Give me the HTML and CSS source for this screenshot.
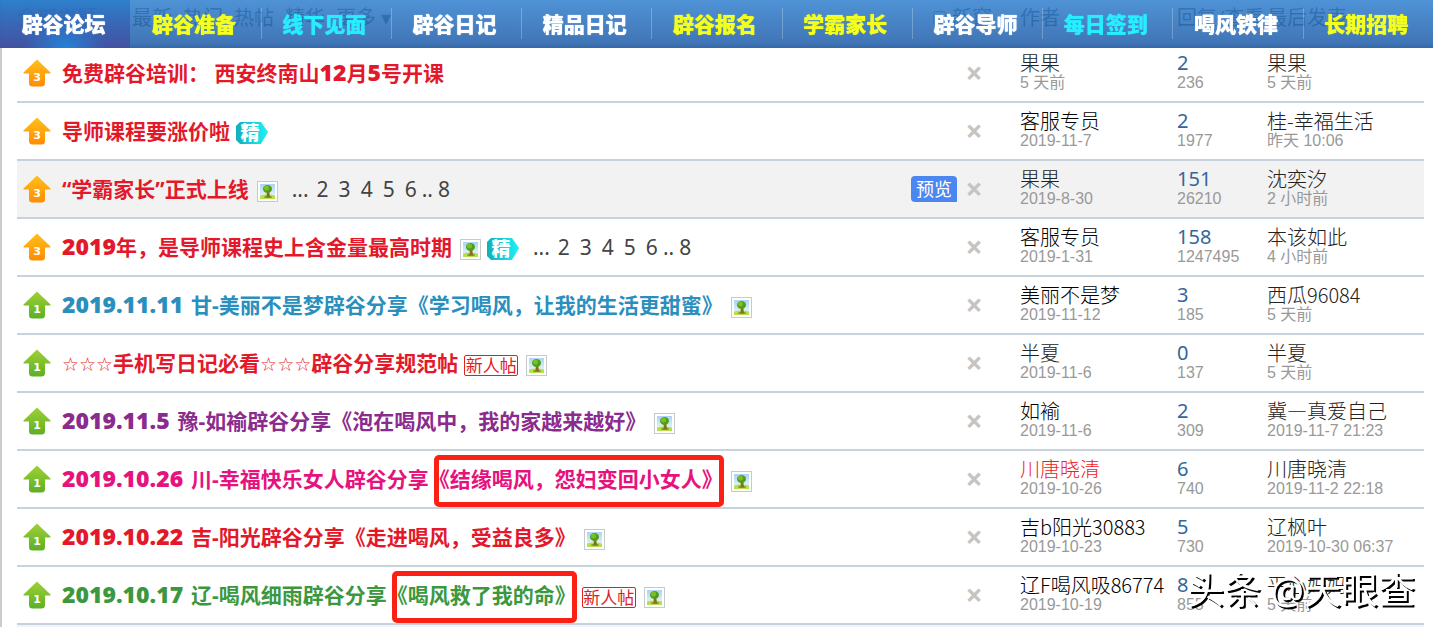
FILE: index.html
```html
<!DOCTYPE html>
<html lang="zh-CN">
  <head>
    <meta charset="utf-8">
    <title>辟谷论坛</title>
    <link rel="stylesheet" href="styles.css">
  </head>
  <body>
    <svg width="0" height="0" class="defs" aria-hidden="true">
      <defs>
        <linearGradient id="orange" x1="0" y1="0" x2="0" y2="1">
          <stop offset="0" stop-color="#ffc01c"/>
          <stop offset="1" stop-color="#ff8c00"/>
        </linearGradient>
        <linearGradient id="green" x1="0" y1="0" x2="0" y2="1">
          <stop offset="0" stop-color="#a0d035"/>
          <stop offset="1" stop-color="#5cb024"/>
        </linearGradient>
        <linearGradient id="cyan" x1="0" y1="0" x2="1" y2="0">
          <stop offset="0" stop-color="#12aebb"/>
          <stop offset="1" stop-color="#1ff0f5"/>
        </linearGradient>
        <linearGradient id="sky" x1="0" y1="0" x2="0" y2="1">
          <stop offset="0" stop-color="#a9d3f7"/>
          <stop offset="1" stop-color="#f4fbf4"/>
        </linearGradient>
      </defs>
      <symbol id="arrow" viewBox="0 0 28 28">
        <path d="M14 0.5L27.5 13.5Q28 14.5 27 14.5H22V24Q22 27.500 18.500 27.500H9.500Q6 27.500 6 24V14.500H1Q0 14.500 0.500 13.500Z"/>
      </symbol>
      <symbol id="pic" viewBox="0 0 21 21">
        <rect x="0.500" y="0.500" width="20" height="20" fill="#fff" stroke="#c5cbc8"/>
        <rect x="3" y="3" width="15" height="15" fill="url(#sky)"/>
        <path d="M3 14.500Q10 12.500 18 14.500V18H3Z" fill="#b4e04c"/>
        <ellipse cx="11" cy="16" rx="4" ry="1" fill="#6aa022"/>
        <path d="M10 9h2l1 7H9.500Z" fill="#9a6426"/>
        <ellipse cx="10.500" cy="8" rx="4.500" ry="4" fill="#4f9f16"/>
        <circle cx="9.500" cy="7" r="2.500" fill="#7cbe28"/>
      </symbol>
      <symbol id="tag" viewBox="0 0 32 22">
        <path d="M4 0H25L32 10L25 22H4L0 18V4Z"/>
      </symbol>
    </svg>

    <nav class="nav">
      <a href="#" class="on">辟谷论坛</a>
      <a href="#" class="yellow">辟谷准备</a>
      <a href="#" class="cyan">线下见面</a>
      <a href="#">辟谷日记</a>
      <a href="#">精品日记</a>
      <a href="#" class="yellow">辟谷报名</a>
      <a href="#" class="yellow">学霸家长</a>
      <a href="#">辟谷导师</a>
      <a href="#" class="cyan">每日签到</a>
      <a href="#">喝风铁律</a>
      <a href="#" class="yellow">长期招聘</a>
    </nav>

    <main class="threadlist">
      <table>
        <colgroup>
          <col class="c-icn">
          <col>
          <col class="c-by">
          <col class="c-num">
          <col class="c-by">
        </colgroup>
        <thead>
          <tr>
            <th colspan="2">
              <div class="filter">
                <a href="#">全部主题</a>
                <a href="#" class="first">最新</a>
                <a href="#">热门</a>
                <a href="#">热帖</a>
                <a href="#">精华</a>
                <a href="#">更多 ▾</a>
                <label class="newwin"><input type="checkbox">新窗</label>
              </div>
            </th>
            <th>作者</th>
            <th>回复/查看</th>
            <th>最后发表</th>
          </tr>
        </thead>
        <tbody>
          <tr>
            <td><svg class="arrow orange"><use href="#arrow"/><text x="14" y="22">3</text></svg></td>
            <td><div class="common">
              <a href="#" class="title red">免费辟谷培训： 西安终南山<b>12</b>月<b>5</b>号开课</a>
              <button class="close" title="隐藏置顶帖">×</button>
            </div></td>
            <td><cite>果果</cite><em>5 天前</em></td>
            <td><a href="#" class="xi2">2</a><em>236</em></td>
            <td><cite>果果</cite><em>5 天前</em></td>
          </tr>
          <tr>
            <td><svg class="arrow orange"><use href="#arrow"/><text x="14" y="22">3</text></svg></td>
            <td><div class="common">
              <a href="#" class="title red">导师课程要涨价啦</a>
              <svg class="tag"><use href="#tag"/><text x="14" y="18">精</text></svg>
              <button class="close" title="隐藏置顶帖">×</button>
            </div></td>
            <td><cite class="black">客服专员</cite><em>2019-11-7</em></td>
            <td><a href="#" class="xi2">2</a><em>1977</em></td>
            <td><cite>桂-幸福生活</cite><em>昨天 10:06</em></td>
          </tr>
          <tr class="hover">
            <td><svg class="arrow orange"><use href="#arrow"/><text x="14" y="22">3</text></svg></td>
            <td><div class="common">
              <a href="#" class="title red">“学霸家长”正式上线</a>
              <svg class="pic"><use href="#pic"/></svg>
              <span class="tps">...<a href="#">2</a><a href="#">3</a><a href="#">4</a><a href="#">5</a><a href="#">6</a>..<a href="#">8</a></span>
              <button class="preview">预览</button>
              <button class="close" title="隐藏置顶帖">×</button>
            </div></td>
            <td><cite>果果</cite><em>2019-8-30</em></td>
            <td><a href="#" class="xi2">151</a><em>26210</em></td>
            <td><cite>沈奕汐</cite><em>2 小时前</em></td>
          </tr>
          <tr>
            <td><svg class="arrow orange"><use href="#arrow"/><text x="14" y="22">3</text></svg></td>
            <td><div class="common">
              <a href="#" class="title red"><b>2019</b>年，是导师课程史上含金量最高时期</a>
              <svg class="pic"><use href="#pic"/></svg>
              <svg class="tag"><use href="#tag"/><text x="14" y="18">精</text></svg>
              <span class="tps">...<a href="#">2</a><a href="#">3</a><a href="#">4</a><a href="#">5</a><a href="#">6</a>..<a href="#">8</a></span>
              <button class="close" title="隐藏置顶帖">×</button>
            </div></td>
            <td><cite class="black">客服专员</cite><em>2019-1-31</em></td>
            <td><a href="#" class="xi2">158</a><em>1247495</em></td>
            <td><cite>本该如此</cite><em>4 小时前</em></td>
          </tr>
          <tr>
            <td><svg class="arrow green"><use href="#arrow"/><text x="14" y="22">1</text></svg></td>
            <td><div class="common">
              <a href="#" class="title blue"><b class="date">2019.11.11 </b>甘-美丽不是梦辟谷分享《学习喝风，让我的生活更甜蜜》</a>
              <svg class="pic"><use href="#pic"/></svg>
              <button class="close" title="隐藏置顶帖">×</button>
            </div></td>
            <td><cite class="black">美丽不是梦</cite><em>2019-11-12</em></td>
            <td><a href="#" class="xi2">3</a><em>185</em></td>
            <td><cite>西瓜96084</cite><em>5 天前</em></td>
          </tr>
          <tr>
            <td><svg class="arrow green"><use href="#arrow"/><text x="14" y="22">1</text></svg></td>
            <td><div class="common">
              <a href="#" class="title red"><i>☆☆☆</i>手机写日记必看<i>☆☆☆</i>辟谷分享规范帖</a>
              <span class="stamp">新人帖</span>
              <svg class="pic"><use href="#pic"/></svg>
              <button class="close" title="隐藏置顶帖">×</button>
            </div></td>
            <td><cite>半夏</cite><em>2019-11-6</em></td>
            <td><a href="#" class="xi2">0</a><em>137</em></td>
            <td><cite>半夏</cite><em>5 天前</em></td>
          </tr>
          <tr>
            <td><svg class="arrow green"><use href="#arrow"/><text x="14" y="22">1</text></svg></td>
            <td><div class="common">
              <a href="#" class="title purple"><b class="date">2019.11.5 </b>豫-如褕辟谷分享《泡在喝风中，我的家越来越好》</a>
              <svg class="pic"><use href="#pic"/></svg>
              <button class="close" title="隐藏置顶帖">×</button>
            </div></td>
            <td><cite class="black">如褕</cite><em>2019-11-6</em></td>
            <td><a href="#" class="xi2">2</a><em>309</em></td>
            <td><cite>冀—真爱自己</cite><em>2019-11-7 21:23</em></td>
          </tr>
          <tr>
            <td><svg class="arrow green"><use href="#arrow"/><text x="14" y="22">1</text></svg></td>
            <td><div class="common">
              <a href="#" class="title pink"><b class="date">2019.10.26 </b>川-幸福快乐女人辟谷分享<span class="mark">《结缘喝风，怨妇变回小女人》</span></a>
              <svg class="pic"><use href="#pic"/></svg>
              <button class="close" title="隐藏置顶帖">×</button>
            </div></td>
            <td><cite class="hot">川唐晓清</cite><em>2019-10-26</em></td>
            <td><a href="#" class="xi2">6</a><em>740</em></td>
            <td><cite>川唐晓清</cite><em>2019-11-2 22:18</em></td>
          </tr>
          <tr>
            <td><svg class="arrow green"><use href="#arrow"/><text x="14" y="22">1</text></svg></td>
            <td><div class="common">
              <a href="#" class="title red"><b class="date">2019.10.22 </b>吉-阳光辟谷分享《走进喝风，受益良多》</a>
              <svg class="pic"><use href="#pic"/></svg>
              <button class="close" title="隐藏置顶帖">×</button>
            </div></td>
            <td><cite class="black">吉b阳光30883</cite><em>2019-10-23</em></td>
            <td><a href="#" class="xi2">5</a><em>730</em></td>
            <td><cite>辽枫叶</cite><em>2019-10-30 06:37</em></td>
          </tr>
          <tr>
            <td><svg class="arrow green"><use href="#arrow"/><text x="14" y="22">1</text></svg></td>
            <td><div class="common">
              <a href="#" class="title grass"><b class="date">2019.10.17 </b>辽-喝风细雨辟谷分享<span class="mark">《喝风救了我的命》</span></a>
              <span class="stamp">新人帖</span>
              <svg class="pic"><use href="#pic"/></svg>
              <button class="close" title="隐藏置顶帖">×</button>
            </div></td>
            <td><cite class="black">辽F喝风吸86774</cite><em>2019-10-19</em></td>
            <td><a href="#" class="xi2">8</a><em>855</em></td>
            <td><cite>平心妈妈</cite><em>5 天前</em></td>
          </tr>
        </tbody>
      </table>
      <div class="separator"></div>
    </main>
    <div class="watermark">头条 @天眼查</div>
  </body>
</html>
```

FILE: styles.css
```css
body{
  margin: 0;
  background: #fff;
  color: #333;
  font-family: "Noto Sans", "Noto Sans CJK SC", sans-serif;
  font-size: 20px;
  overflow: hidden;
}
a{
  color: inherit;
  text-decoration: none;
}
button{
  border: 0;
  padding: 0;
  font-family: inherit;
  cursor: pointer;
}
.defs{
  position: absolute;
}

/* 顶部导航 */
.nav{
  position: fixed;
  top: 0;
  left: 0;
  right: 0;
  z-index: 10;
  display: flex;
  height: 48px;
  background: linear-gradient(rgba(54,132,208,.88), rgba(38,98,172,.88) 90%, rgba(30,86,156,.9));
}
.nav a{
  flex: 1;
  box-sizing: border-box;
  padding-right: 3px;
  text-align: center;
  line-height: 48px;
  font-size: 21px;
  font-weight: 900;
  color: #fff;
  text-shadow: 0 0 1px currentColor;
  background: linear-gradient(rgba(255,255,255,.25), rgba(255,255,255,.25)) left 8px / 1px 31px no-repeat;
}
.nav a.on{
  background: radial-gradient(ellipse at 50% 100%, #2482d8 0, rgba(36,130,216,0) 45%), linear-gradient(rgba(32,120,200,.7), rgba(68,78,160,.9));
}
.nav a.on + a{
  background: none;
}
.nav a.yellow{
  color: #f4ff1e;
}
.nav a.cyan{
  color: #27edff;
}

/* 帖子列表 */
.threadlist{
  border-left: 2px solid #ccc;
  padding: 0 9px 0 15px;
}
table{
  width: 100%;
  table-layout: fixed;
  border-collapse: collapse;
}
.c-icn{
  width: 45px;
}
.c-by{
  width: 157px;
}
.c-num{
  width: 90px;
}
th{
  height: 35px;
  padding: 0 0 9px;
  text-align: left;
  font-weight: normal;
  line-height: 35px;
  white-space: nowrap;
}
.filter{
  display: flex;
  gap: 11px;
}
.filter .first{
  margin-left: 24px;
}
.newwin{
  display: flex;
  align-items: center;
  gap: 6px;
  margin-left: auto;
  margin-right: 28px;
}
.newwin input{
  margin: 0;
}
td{
  box-sizing: border-box;
  height: 58px;
  padding: 0;
  border-bottom: 2px solid #c8d2dc;
  white-space: nowrap;
}
tr.hover td{
  background: #f2f2f2;
}
cite, em, .xi2{
  display: block;
  font-style: normal;
  line-height: 20px;
}
cite{
  font-family: "Noto Sans CJK SC", sans-serif;
  font-weight: 300;
  color: #222;
}
cite.black{
  color: #000;
}
cite.hot{
  color: #e22;
}
em{
  color: #999;
  font-family: "Liberation Sans", "Noto Sans CJK SC", sans-serif;
  font-size: 16px;
}
.xi2{
  color: #369;
}

.arrow{
  display: block;
  width: 28px;
  height: 28px;
  margin-left: 6px;
}
.arrow text{
  fill: #fff;
  font: bold 11px "DejaVu Sans", sans-serif;
  text-anchor: middle;
}
.arrow.orange{
  fill: url(#orange);
}
.arrow.green{
  fill: url(#green);
}
.common{
  display: flex;
  align-items: center;
  height: 56px;
}
.title{
  font-size: 21px;
  font-weight: bold;
  line-height: 28px;
}
.title b{
  font-family: "Open Sans", "Noto Sans", sans-serif;
  font-size: 23px;
  line-height: 20px;
  white-space: pre;
}
.title .date{
  margin-right: 2px;
}
.title i{
  font-family: "DejaVu Sans", sans-serif;
  font-size: 19px;
  font-style: normal;
  font-weight: normal;
}
.red{
  color: #e3192b;
}
.blue{
  color: #2b8fbd;
}
.purple{
  color: #8a2b8e;
}
.pink{
  color: #e6127e;
}
.grass{
  color: #3b983f;
}
.pic{
  flex: none;
  width: 21px;
  height: 21px;
  margin: 4px 0 0 8px;
}
.tag{
  flex: none;
  width: 32px;
  height: 22px;
  margin: 4px 0 0 6px;
  fill: url(#cyan);
  overflow: visible;
}
.tag text{
  fill: #fff;
  font: 900 19px "Noto Sans CJK SC", sans-serif;
  text-anchor: middle;
}
.stamp{
  box-sizing: border-box;
  width: 54px;
  height: 21px;
  margin: 4px 0 0 6px;
  border: 1px solid #d22;
  border-radius: 2px;
  color: #d22;
  font-size: 17px;
  line-height: 19px;
  text-align: center;
}
.tps{
  margin-left: 14px;
  color: #444;
  font-size: 21px;
}
.tps a{
  padding: 0 5px;
}
.tps a:first-child{
  padding-left: 8px;
}
.close{
  width: 14px;
  margin-left: auto;
  margin-right: 39px;
  background: none;
  color: #c4c4c4;
  font-size: 30px;
  font-weight: bold;
  line-height: 28px;
  display: flex;
  justify-content: center;
}
.preview{
  width: 46px;
  height: 26px;
  margin-left: auto;
  border-radius: 4px 4px 0 4px;
  background: #4c86f0;
  color: #fff;
  font-size: 18px;
  line-height: 26px;
}
.preview + .close{
  margin-left: 10px;
}
.separator{
  height: 2px;
  background: #eef4fa;
}

/* 红框标注 */
.mark{
  position: relative;
}
.mark::after{
  content: "";
  position: absolute;
  top: -10px;
  bottom: -14px;
  left: 5px;
  right: -1px;
  border: 5px solid #fb2015;
  border-radius: 5px;
}
.watermark{
  position: fixed;
  right: 18px;
  bottom: 14px;
  color: #fff;
  font-size: 37px;
  line-height: 46px;
  text-shadow: 2px 2px 0 #000;
}
```
